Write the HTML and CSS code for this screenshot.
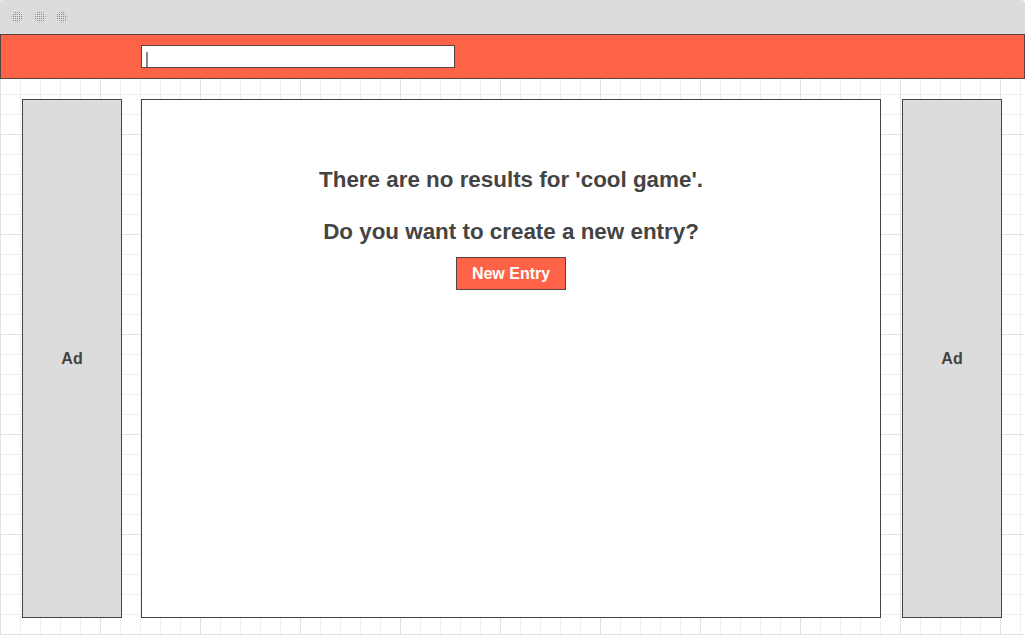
FILE: index.html
```html
<!DOCTYPE html>
<html>
<head>
<meta charset="utf-8">
<link rel="stylesheet" href="styles.css">
</head>
<body>
<div class="window">
  <div class="titlebar">
    <svg class="dots" width="60" height="14" viewBox="0 0 60 14">
      <defs>
        <pattern id="dp" width="2" height="2" patternUnits="userSpaceOnUse">
          <rect x="0" y="0" width="1" height="1" fill="#8a8a8a"/>
        </pattern>
      </defs>
      <circle cx="6" cy="7" r="5.5" fill="url(#dp)"/>
      <circle cx="29" cy="7" r="5.5" fill="url(#dp)"/>
      <circle cx="51" cy="7" r="5.5" fill="url(#dp)"/>
    </svg>
  </div>
  <div class="header">
    <div class="search"><span class="caret"></span></div>
  </div>
  <div class="content">
    <div class="ad">Ad</div>
    <div class="main">
      <p class="msg msg-first">There are no results for 'cool game'.</p>
      <p class="msg msg-second">Do you want to create a new entry?</p>
      <button class="btn">New Entry</button>
    </div>
    <div class="ad ad-right">Ad</div>
  </div>
</div>
</body>
</html>
```
FILE: styles.css
```css
html, body {
  margin: 0;
  padding: 0;
  background: #ffffff;
}
body {
  font-family: "Liberation Sans", Arial, sans-serif;
  color: #444444;
}
.window {
  width: 1025px;
  height: 635px;
  overflow: hidden;
  background-color: #ffffff;
  background-image:
    linear-gradient(to right, #e2e2e2 1px, transparent 1px),
    linear-gradient(to bottom, #e2e2e2 1px, transparent 1px),
    linear-gradient(to right, #efefef 1px, transparent 1px),
    linear-gradient(to bottom, #efefef 1px, transparent 1px);
  background-size: 100px 100px, 100px 100px, 20px 20px, 20px 20px;
  background-position: 0 34px, 0 34px, 0 34px, 0 34px;
}
.titlebar {
  height: 34px;
  background: #dcdcdc;
  border-radius: 4px 4px 0 0;
  display: flex;
  align-items: center;
  padding-left: 11px;
  box-sizing: border-box;
}
.dots {
  display: block;
  margin-top: -1px;
}
.header {
  height: 45px;
  box-sizing: border-box;
  background: #ff6347;
  border: 1px solid #5a4440;
  padding: 10px 0 0 140px;
}
.search {
  width: 314px;
  height: 23px;
  box-sizing: border-box;
  background: #ffffff;
  border: 1px solid #5a4440;
  padding: 6px 0 0 4px;
}
.caret {
  display: block;
  width: 2px;
  height: 15px;
  background: #8a8a8a;
}
.content {
  display: flex;
  padding: 20px 0 0 22px;
}
.ad {
  width: 100px;
  height: 519px;
  box-sizing: border-box;
  background: #dcdcdc;
  border: 1px solid #444444;
  display: flex;
  align-items: center;
  justify-content: center;
  font-weight: bold;
  font-size: 16px;
  color: #444444;
}
.ad-right {
  margin-left: 21px;
}
.main {
  width: 740px;
  height: 519px;
  margin-left: 19px;
  box-sizing: border-box;
  background: #ffffff;
  border: 1px solid #444444;
  display: flex;
  flex-direction: column;
  align-items: center;
}
.msg {
  margin: 0;
  font-size: 22.4px;
  font-weight: bold;
  line-height: 26px;
  color: #444444;
}
.msg-first {
  margin-top: 67px;
}
.msg-second {
  margin-top: 26px;
}
.btn {
  margin-top: 12px;
  width: 110px;
  height: 33px;
  box-sizing: border-box;
  background: #ff6347;
  border: 1px solid #5a4440;
  color: #ffffff;
  font-family: "Liberation Sans", Arial, sans-serif;
  font-weight: bold;
  font-size: 16px;
  padding: 0;
  line-height: 29px;
}
```
